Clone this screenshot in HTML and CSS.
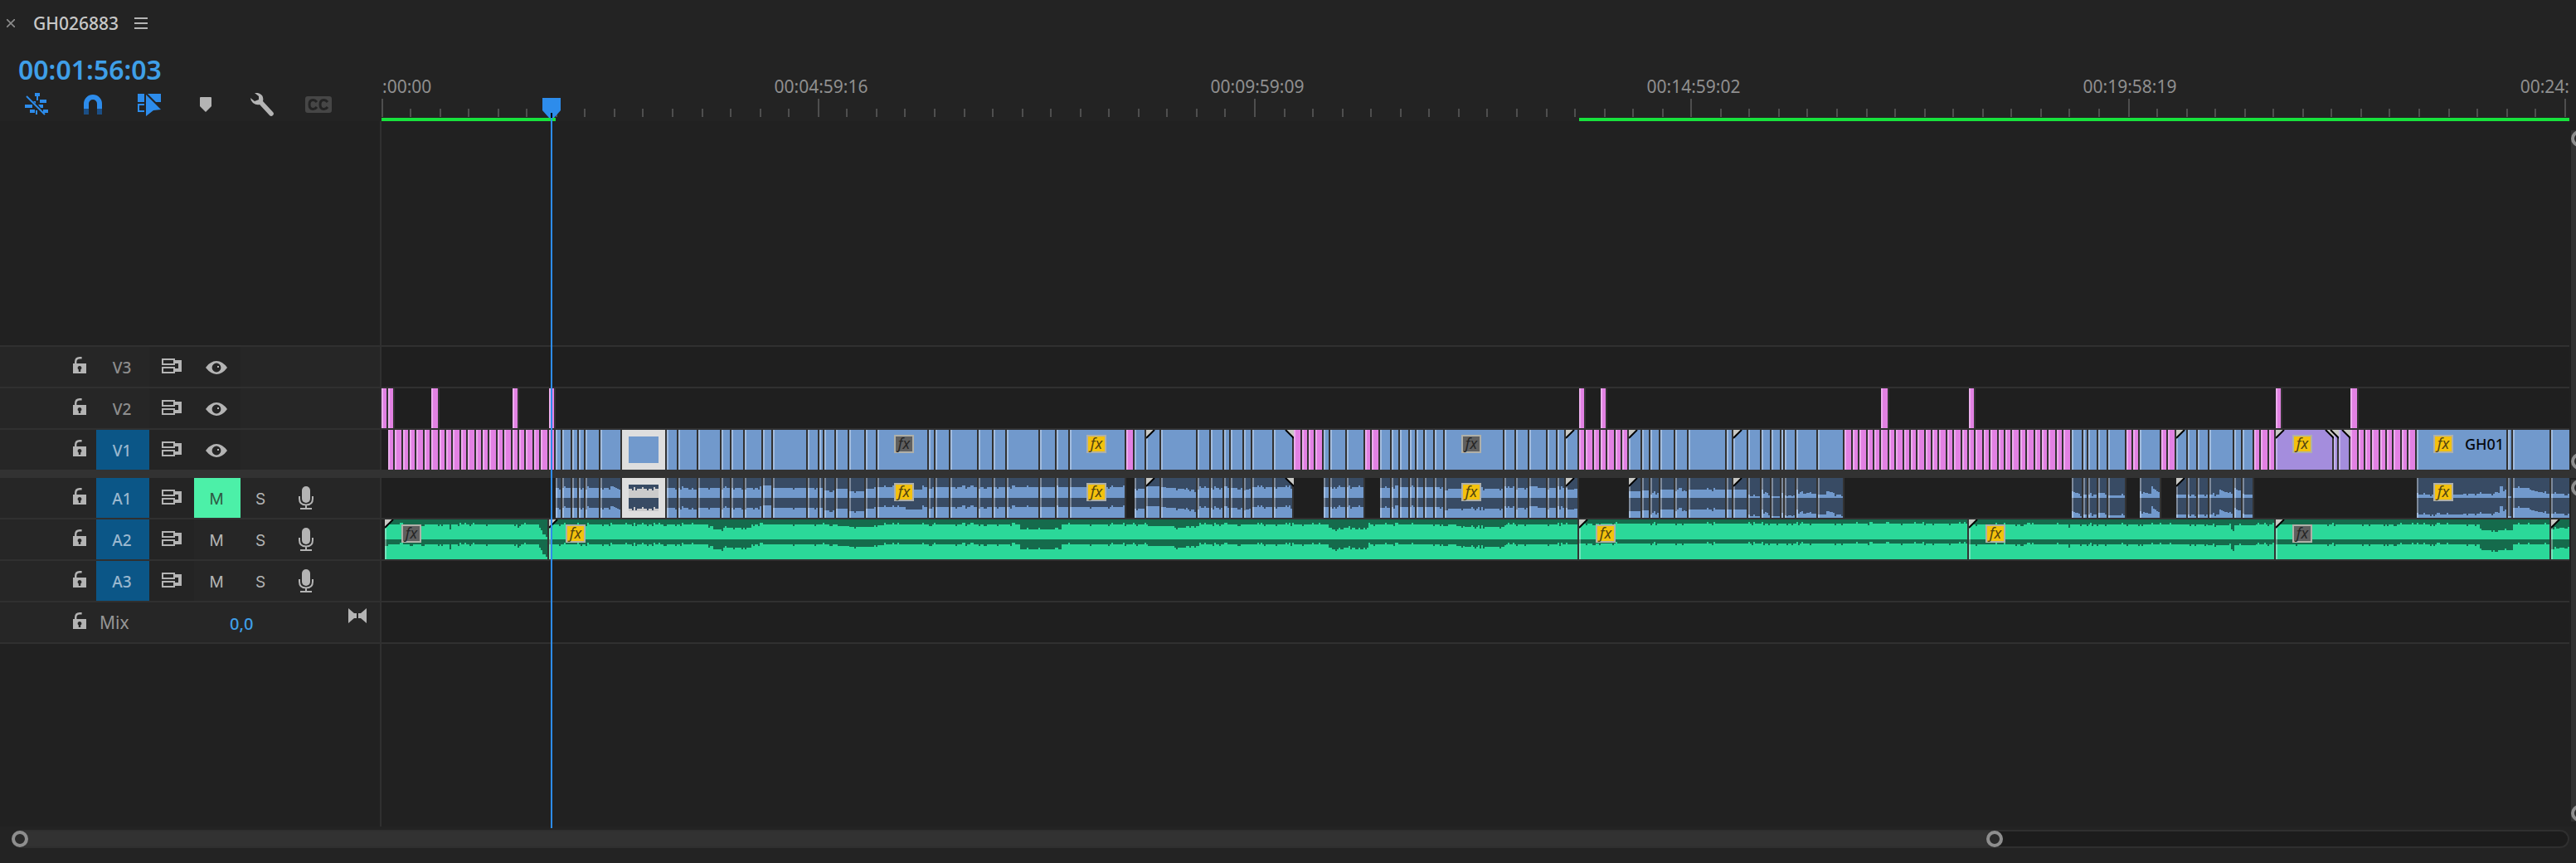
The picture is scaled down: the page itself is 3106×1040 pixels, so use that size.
FILE: index.html
```html
<!DOCTYPE html>
<html lang="en">
<head>
    <meta charset="UTF-8">
    <meta name="viewport" content="width=device-width, initial-scale=1.0">
    <title>GH026883</title>
    <link rel="stylesheet" href="styles.css">
</head>
<body>
    <!-- Icons shared by the track headers -->
    <svg class="sprite" aria-hidden="true">
        <symbol id="lock" viewBox="0 0 16 20">
            <path d="M3.2 9V6Q3.2 1.2 8 1.2h2.6" fill="none" stroke="currentColor" stroke-width="2.4"/>
            <path fill-rule="evenodd" d="M0 8h16v12H0zM8 11a2.4 2.4 0 0 0-1.2 4.5V18h2.4v-2.5A2.4 2.4 0 0 0 8 11z"/>
        </symbol>
        <symbol id="sync" viewBox="0 0 24 18">
            <path fill="none" stroke="currentColor" stroke-width="2" d="M1 1h14v6H1zM1 11h14v6H1z"/>
            <path d="M16 2h8v14h-8v-4h4V6h-4z"/>
        </symbol>
        <symbol id="eye" viewBox="0 0 26 16">
            <path fill-rule="evenodd" d="M0 8Q6 0 13 0t13 8q-6 8-13 8T0 8zM13 2.6a5.4 5.4 0 1 0 0 10.8 5.4 5.4 0 0 0 0-10.8z"/>
            <path d="M14 6h2v2h-2z"/>
        </symbol>
        <symbol id="mic" viewBox="0 0 18 28">
            <rect x="4" y="0" width="10" height="20" rx="5"/>
            <path d="M1 12v3q0 7.5 8 7.5t8-7.5v-3M9 22v5M2 27h14" fill="none" stroke="currentColor" stroke-width="2"/>
        </symbol>
    </svg>

    <main class="panel">
        <header class="tabs">
            <button class="close" aria-label="Close sequence">
                <svg width="10" height="10" viewBox="0 0 10 10"><path d="M0 0l10 10M10 0L0 10" stroke="currentColor" stroke-width="1.6"/></svg>
            </button>
            <h1 class="name">GH026883</h1>
            <button class="menu" aria-label="Panel menu">
                <svg width="16" height="14" viewBox="0 0 16 14"><path d="M0 0h16v2H0zM0 6h16v2H0zM0 12h16v2H0z"/></svg>
            </button>
        </header>

        <div class="top">
            <div class="controls">
                <div class="timecode">00:01:56:03</div>
                <div class="tools">
                    <button class="active" aria-label="Insert as nests">
                        <svg width="28" height="28" viewBox="0 0 28 28">
                            <path d="M12 0h6v4h-2v5h-2V4h-2zM18 8h8v4h-8zM0 14h9v4H0zM10 10h3v3zM6 20h6v4H6zM13 21h2v5h-2zM16 14h6v4h-3zM22 20h6v4h-6z"/>
                            <path d="M2 4l22 22" stroke="currentColor" stroke-width="2"/>
                        </svg>
                    </button>
                    <button class="active" aria-label="Snap">
                        <svg width="22" height="24" viewBox="0 0 22 24">
                            <path d="M0 17v-6a11 11 0 0 1 22 0v6h-6v-6a5 5 0 0 0-10 0v6z"/>
                            <path class="tip" d="M0 17h6v7H0zM16 17h6v7h-6z"/>
                        </svg>
                    </button>
                    <button class="active" aria-label="Linked selection">
                        <svg width="28" height="28" viewBox="0 0 28 28">
                            <path d="M0 1h8v10H0zM12 1h16v10h-6zM0 13h8v2H2v6h6v2H0zM10 2l18 18-9 1-9 7z"/>
                        </svg>
                    </button>
                    <button aria-label="Add marker">
                        <svg width="14" height="18" viewBox="0 0 14 18"><path d="M1 0h12q1 0 1 1v10l-7 7-7-7V1q0-1 1-1z"/></svg>
                    </button>
                    <button aria-label="Timeline settings">
                        <svg width="28" height="28" viewBox="0 0 28 28">
                            <path d="M5 0Q10-1 14 3q2 3 1 7l12 13q2 2 0 4-2 2-4 0L11 14q-4 1-8-2Q0 9 0 6l5 4 5-2V4z"/>
                        </svg>
                    </button>
                    <button class="dim" aria-label="Captions">
                        <svg width="32" height="20" viewBox="0 0 32 20">
                            <rect width="32" height="20" rx="3"/>
                            <path d="M14 7Q12 4.500 9.500 4.500 5 4.500 5 10t4.500 5.500Q12 15.500 14 13M27 7q-2-2.500-4.500-2.500Q18 4.500 18 10t4.500 5.500Q25 15.500 27 13" fill="none" stroke="#232323" stroke-width="3"/>
                        </svg>
                    </button>
                </div>
            </div>
            <div class="ruler">
                <div class="labels">
                    <span>:00:00</span>
                    <span>00:04:59:16</span>
                    <span>00:09:59:09</span>
                    <span>00:14:59:02</span>
                    <span>00:19:58:19</span>
                    <span>00:24:</span>
                </div>
                <svg class="ticks" height="22"><path id="ticks"/></svg>
                <div class="render" id="render"></div>
            </div>
        </div>

        <section class="section video">
            <div class="rows">
                <div class="row filler"><div class="head"></div><div class="lane"></div></div>
                <div class="row">
                    <div class="head">
                        <button class="lock" aria-label="Lock V3"><svg width="16" height="20"><use href="#lock"/></svg></button>
                        <button class="target">V3</button>
                        <button class="sync" aria-label="Sync lock V3"><svg width="24" height="18"><use href="#sync"/></svg></button>
                        <button class="eye" aria-label="Show V3"><svg width="26" height="16"><use href="#eye"/></svg></button>
                    </div>
                    <div class="lane"></div>
                </div>
                <div class="row">
                    <div class="head">
                        <button class="lock" aria-label="Lock V2"><svg width="16" height="20"><use href="#lock"/></svg></button>
                        <button class="target">V2</button>
                        <button class="sync" aria-label="Sync lock V2"><svg width="24" height="18"><use href="#sync"/></svg></button>
                        <button class="eye" aria-label="Show V2"><svg width="26" height="16"><use href="#eye"/></svg></button>
                    </div>
                    <div class="lane" id="v2"></div>
                </div>
                <div class="row">
                    <div class="head">
                        <button class="lock" aria-label="Lock V1"><svg width="16" height="20"><use href="#lock"/></svg></button>
                        <button class="target on">V1</button>
                        <button class="sync" aria-label="Sync lock V1"><svg width="24" height="18"><use href="#sync"/></svg></button>
                        <button class="eye" aria-label="Show V1"><svg width="26" height="16"><use href="#eye"/></svg></button>
                    </div>
                    <div class="lane" id="v1"></div>
                </div>
            </div>
            <div class="vscroll"><div class="bar">
                <button class="knob" aria-label="Video scroll start"></button>
                <button class="knob" aria-label="Video scroll end"></button>
            </div></div>
        </section>

        <div class="divider"></div>

        <section class="section audio">
            <div class="rows">
                <div class="row">
                    <div class="head">
                        <button class="lock" aria-label="Lock A1"><svg width="16" height="20"><use href="#lock"/></svg></button>
                        <button class="target on">A1</button>
                        <button class="sync" aria-label="Sync lock A1"><svg width="24" height="18"><use href="#sync"/></svg></button>
                        <button class="mute on">M</button>
                        <button class="solo">S</button>
                        <button class="mic" aria-label="Record A1"><svg width="18" height="28"><use href="#mic"/></svg></button>
                    </div>
                    <div class="lane" id="a1"></div>
                </div>
                <div class="row">
                    <div class="head">
                        <button class="lock" aria-label="Lock A2"><svg width="16" height="20"><use href="#lock"/></svg></button>
                        <button class="target on">A2</button>
                        <button class="sync" aria-label="Sync lock A2"><svg width="24" height="18"><use href="#sync"/></svg></button>
                        <button class="mute">M</button>
                        <button class="solo">S</button>
                        <button class="mic" aria-label="Record A2"><svg width="18" height="28"><use href="#mic"/></svg></button>
                    </div>
                    <div class="lane" id="a2"></div>
                </div>
                <div class="row">
                    <div class="head">
                        <button class="lock" aria-label="Lock A3"><svg width="16" height="20"><use href="#lock"/></svg></button>
                        <button class="target on">A3</button>
                        <button class="sync" aria-label="Sync lock A3"><svg width="24" height="18"><use href="#sync"/></svg></button>
                        <button class="mute">M</button>
                        <button class="solo">S</button>
                        <button class="mic" aria-label="Record A3"><svg width="18" height="28"><use href="#mic"/></svg></button>
                    </div>
                    <div class="lane"></div>
                </div>
                <div class="row">
                    <div class="head">
                        <button class="lock" aria-label="Lock mix"><svg width="16" height="20"><use href="#lock"/></svg></button>
                        <span class="mix">Mix</span>
                        <button class="level">0,0</button>
                        <button class="keys" aria-label="Keyframes">
                            <svg width="22" height="18" viewBox="0 0 22 18"><path d="M0 0l7 6h3v6H7l-7 6zM22 0l-7 6h-3v6h3l7 6z"/></svg>
                        </button>
                    </div>
                    <div class="lane"></div>
                </div>
                <div class="row filler last"><div class="head"></div><div class="lane"></div></div>
            </div>
            <div class="vscroll"><div class="bar">
                <button class="knob" aria-label="Audio scroll start"></button>
                <button class="knob" aria-label="Audio scroll end"></button>
            </div></div>
        </section>

        <div class="hscroll">
            <div class="thumb">
                <button class="knob" aria-label="Zoom start"></button>
                <button class="knob" aria-label="Zoom end"></button>
            </div>
        </div>

        <div class="playhead">
            <svg width="22" height="24" viewBox="0 0 22 24">
                <path d="M0 0h22v15l-8 9H8l-8-9z"/>
                <path class="slot" d="M10 18h2v6h-2z"/>
            </svg>
        </div>
    </main>

    <script src="script.js"></script>
</body>
</html>
```
FILE: styles.css
```css
* {
    box-sizing: border-box;
}

body {
    margin: 0;
    background: #232323;
    color: #b4b4b4;
    font-family: "Noto Sans", "Open Sans", sans-serif;
    overflow: hidden;
}

button {
    display: flex;
    align-items: center;
    justify-content: center;
    padding: 0;
    border: none;
    background: none;
    color: inherit;
    font: inherit;
    cursor: pointer;
}

svg {
    display: block;
    fill: currentColor;
}

.sprite {
    position: absolute;
    width: 0;
    height: 0;
}

.panel {
    position: relative;
    display: flex;
    flex-direction: column;
    height: 100vh;
}

/* Tab row */
.tabs {
    display: flex;
    align-items: center;
    height: 56px;
    padding-left: 8px;
}

.close {
    color: #8c8c8c;
}

.name {
    margin: 0 19px 0 22px;
    font-size: 21px;
    font-weight: 500;
    color: #c8c8c8;
}

/* Timecode, tools and ruler */
.top {
    display: flex;
    height: 90px;
    padding-right: 8px;
}

.controls {
    width: 460px;
}

.timecode {
    padding-left: 22px;
    font-size: 32px;
    font-weight: 600;
    line-height: 56px;
    color: #3f9fe8;
}

.tools {
    display: flex;
    padding-left: 10px;
}

.tools button {
    width: 68px;
    height: 28px;
}

.tools .active {
    color: #2d8ceb;
}

.tools .tip {
    fill: #1b4f86;
}

.tools .dim {
    color: #464646;
}

.ruler {
    display: flex;
    flex: 1;
    flex-direction: column;
    justify-content: flex-end;
    min-width: 0;
    overflow: hidden;
}

.labels {
    display: flex;
    font-size: 21px;
    line-height: 28px;
    color: #8f8f8f;
}

.labels span {
    flex: 0 0 526px;
    text-align: center;
}

.labels span:first-child {
    flex-basis: 267px;
    padding-left: 1px;
    text-align: left;
}

.labels span:last-child {
    flex: 1 1 0;
    text-align: right;
}

.ticks {
    width: 100%;
    margin-top: 1px;
    fill: #4e4e4e;
    shape-rendering: crispEdges;
}

.render {
    display: flex;
    height: 5px;
    padding-top: 1px;
}

.render div {
    background: #17e23c;
}

/* Track area */
.section {
    display: flex;
    flex: 1 1 0;
    min-height: 0;
    background: #212121;
}

.rows {
    display: flex;
    flex: 1;
    flex-direction: column;
    min-width: 0;
}

.row {
    display: flex;
    height: 50px;
    border-bottom: 2px solid #303030;
}

.video .row:last-child {
    height: 48px;
    border-bottom: none;
}

.row.filler {
    flex: 1;
}

.row.last {
    border-bottom: none;
}

.head {
    display: flex;
    align-items: stretch;
    flex: 0 0 460px;
    padding-left: 76px;
    border-right: 2px solid #303030;
    background: #262626;
}

.filler .head,
.filler .lane {
    background: #212121;
}

.lane {
    display: flex;
    flex: 1;
    min-width: 0;
    overflow: hidden;
    background: #1f1f1f;
}

.divider {
    height: 10px;
    background: #323232;
}

.lock {
    width: 40px;
    padding-bottom: 4px;
}

.target {
    width: 64px;
    padding: 2px 2px 0 0;
    font-size: 19px;
    font-weight: 500;
    color: #8e8e8e;
}

.target.on {
    background: #0b5687;
    color: #9ab8cf;
}

.sync {
    width: 54px;
    padding-bottom: 2px;
    background: #242424;
}

.eye,
.mute {
    width: 56px;
}

.eye {
    background: #242424;
    padding: 2px 2px 0 0;
}

.mute,
.solo {
    padding: 2px 2px 0 0;
    font-family: Inter, "Noto Sans", sans-serif;
    font-size: 19px;
    font-weight: 400;
}

.mute.on {
    background: #4cf0a8;
    color: #2f5a45;
}

.solo {
    width: 50px;
}

.mic {
    width: 58px;
}

.mix {
    width: 161px;
    padding-left: 4px;
    font-size: 21px;
    line-height: 48px;
    color: #969696;
}

.level {
    padding-top: 2px;
    font-size: 20px;
    font-weight: 500;
    color: #3f9fe8;
}

.keys {
    margin: 0 16px 16px auto;
}

/* Clips: the right border is the cut between two clips */
.clip {
    position: relative;
    flex: none;
    height: 48px;
    border-right: 2px solid #323232;
}

.clip::before {
    content: "";
    position: absolute;
    inset: 0 auto 0 0;
    width: 2px;
    background: rgba(255, 255, 255, 0.35);
}

.pink { background: #e281e3; }
.blue { background: #7199cc; }
.purple { background: #a48ddd; }

.wave-blue {
    background: #384b64;
    color: #7199cc;
}

.wave-green {
    background: #156b4c;
    color: #2bd899;
}

.wave {
    shape-rendering: crispEdges;
}

.clip.selected::after {
    content: "";
    position: absolute;
    inset: 0;
    border: 8px solid #dedede;
}

.clip.selected .wave {
    color: #cbcbcb;
}

.fade {
    position: absolute;
    top: 0;
    left: 0;
    z-index: 1;
    fill: #c8c8c4;
    stroke: none;
}

.fade path + path {
    fill: none;
    stroke: #000;
    stroke-width: 2;
}

.fade.out {
    right: -2px;
    left: auto;
    transform: scaleX(-1);
}

.fx {
    position: absolute;
    top: 6px;
    left: 20px;
    width: 24px;
    height: 22px;
    border: 2px solid #b0b0a8;
    background: #f4c20d;
    color: #54450f;
    font-size: 18px;
    font-style: italic;
    line-height: 17px;
    text-align: center;
}

.fx.off {
    background: #5f5f5f;
    color: #262626;
}

.title {
    position: absolute;
    top: 6px;
    left: 58px;
    color: #06080c;
    font-size: 18px;
    font-weight: 500;
    line-height: 22px;
}

/* Scroll bars */
.vscroll {
    width: 8px;
    padding-left: 2px;
    overflow: hidden;
}

.vscroll .bar {
    display: flex;
    flex-direction: column;
    justify-content: space-between;
    width: 22px;
    height: 100%;
    background: #323232;
}

.video .vscroll {
    padding-top: 11px;
}

.audio .vscroll {
    padding: 2px 0 6px 2px;
}

.knob {
    width: 20px;
    height: 20px;
    border: 4px solid #8e8e8e;
    border-radius: 50%;
    background: #2a2a2a;
}

.hscroll {
    height: 22px;
    margin: 4px 8px 18px 14px;
    border: 2px solid #2f2f2f;
    border-left: none;
    border-radius: 11px;
    background: #1c1c1c;
}

.hscroll .thumb {
    display: flex;
    align-items: center;
    justify-content: space-between;
    width: 77.9%;
    height: 18px;
    border-radius: 11px;
    background: #323232;
}

/* Playhead lies over the ruler and all tracks */
.playhead {
    position: absolute;
    top: 118px;
    bottom: 42px;
    left: 654px;
    width: 22px;
    z-index: 2;
    color: #2d8ceb;
    pointer-events: none;
}

.playhead::after {
    content: "";
    position: absolute;
    top: 24px;
    bottom: 0;
    left: 10px;
    width: 2px;
    background: #2d8ceb;
}

.playhead .slot {
    fill: #000;
}
```
FILE: script.js
```js
var LANE_START = 460;

// [colour, cut points, end of the run]
var v2 = [
    ['pink', [460, 468], 476], ['pink', [520], 530], ['pink', [618], 626], ['pink', [662], 670],
    ['pink', [1904], 1912], ['pink', [1930], 1938], ['pink', [2268], 2278], ['pink', [2374], 2382],
    ['pink', [2744], 2752], ['pink', [2834], 2844]
];

var v1 = [
    ['pink', [468, 476, 486, 494, 502, 512, 520, 530, 538, 546, 556, 564, 574, 582, 590, 600, 608, 618, 626, 634, 644, 652, 662], 670],
    ['blue', [670, 678, 690, 698, 706, 724, 750, 804, 818, 842, 870, 882, 898, 920, 932, 974, 988, 994, 1008, 1024, 1044, 1058,
        1120, 1128, 1146, 1180, 1198, 1214, 1254, 1274, 1290], 1358],
    ['pink', [1358], 1368],
    ['blue', [1368, 1382, 1400, 1444, 1460, 1476, 1484, 1500, 1510, 1536], 1560],
    ['pink', [1560, 1570, 1578, 1586], 1596],
    ['blue', [1596, 1604, 1624], 1646],
    ['pink', [1646, 1654], 1664],
    ['blue', [1664, 1678, 1688, 1700, 1708, 1718, 1730, 1742, 1814, 1828, 1844, 1866, 1878, 1888], 1904],
    ['pink', [1904, 1912, 1922, 1930, 1938, 1948, 1956], 1964],
    ['blue', [1964, 1980, 1990, 2002, 2020, 2036, 2082, 2090, 2108, 2124, 2136, 2148, 2152, 2166, 2192], 2224],
    ['pink', [2224, 2234, 2242, 2252, 2260, 2268, 2278, 2286, 2296, 2304, 2312, 2322, 2330, 2338, 2348, 2356, 2366, 2374, 2382,
        2392, 2400, 2410, 2418, 2426, 2436, 2444, 2454, 2462, 2470, 2480, 2488], 2498],
    ['blue', [2498, 2512, 2518, 2530, 2542], 2564],
    ['pink', [2564, 2572], 2580],
    ['blue', [2580], 2606],
    ['pink', [2606, 2614], 2624],
    ['blue', [2624, 2638, 2650, 2664, 2694, 2704], 2718],
    ['pink', [2718, 2726, 2736], 2744],
    ['purple', [2744, 2814, 2820], 2834],
    ['pink', [2834, 2844, 2852, 2860, 2870, 2878, 2886, 2896, 2904], 2914],
    ['blue', [2914, 3024, 3030, 3076], 3100]
];

// A1 is the sound of the camera clips
var a1 = v1.filter(function(run) {
    return run[0] === 'blue';
}).map(function(run) {
    return ['wave-blue', run[1], run[2]];
});

var a2 = [
    ['wave-green', [464], 662],
    ['wave-green', [662], 1904],
    ['wave-green', [1904, 2374, 2744, 3076], 3100]
];

// [from, depth of the quiet part, depth where the next step begins (optional)]
var blueLevels = [
    [670, 12], [738, 10, 16], [750, 13], [804, 12], [830, 14], [842, 12], [920, 9], [932, 12], [994, 15], [1008, 13], [1024, 16],
    [1044, 13], [1058, 11], [1092, 14], [1112, 11], [1368, 13], [1382, 10], [1400, 11, 15], [1444, 12], [1500, 15, 12],
    [1510, 11], [1664, 12], [1678, 11], [1742, 13], [1814, 12], [1844, 10], [1854, 12], [1888, 14, 10], [1964, 16], [1980, 15],
    [1990, 18], [2002, 14], [2020, 14], [2024, 12], [2028, 14, 18], [2036, 14], [2108, 22], [2124, 16, 20], [2136, 22],
    [2148, 18], [2152, 21], [2166, 16, 20], [2178, 18], [2182, 15], [2184, 19], [2192, 20], [2202, 16, 18], [2212, 20],
    [2498, 16, 20], [2508, 20], [2530, 18], [2542, 21], [2580, 16, 20], [2594, 12, 18], [2604, 20], [2676, 14, 20],
    [2690, 21], [2694, 12, 18], [2702, 19], [2706, 20], [2914, 20], [2970, 19], [3008, 15], [3012, 18], [3014, 10], [3018, 16],
    [3024, 22], [3030, 12], [3048, 14, 20], [3076, 19]
];

var greenLevels = [
    [464, 6], [541, 10], [544, 6], [624, 10], [626, 6], [650, 10, 24], [660, 6], [853, 8], [860, 12], [872, 10], [906, 6],
    [1010, 8], [1024, 9], [1058, 7], [1066, 6], [1230, 12], [1280, 6], [1384, 8], [1416, 10], [1432, 8], [1444, 6], [1602, 10],
    [1608, 12], [1620, 10], [1634, 12], [1650, 6], [1756, 8], [1766, 9], [1816, 6], [1904, 5], [2374, 6], [2494, 10], [2496, 6],
    [2662, 7], [2690, 14], [2694, 7], [2720, 6], [2990, 13], [3030, 6], [3076, 12, 8]
];

var off = 'off', on = 'on';
var options = {
    v1: {
        fx: { 1058: off, 1290: on, 1742: off, 2744: on, 2914: on },
        fadeIn: [1382, 1888, 1964, 2090, 2624, 2744],
        fadeOut: [1536, 2744, 2814, 2820],
        selected: 750,
        title: { 2914: 'GH01' }
    },
    a1: {
        fx: { 1058: on, 1290: on, 1742: on, 2914: on },
        fadeIn: [1382, 1888, 1964, 2090, 2624],
        fadeOut: [1536],
        selected: 750,
        levels: blueLevels
    },
    a2: {
        fx: { 464: off, 662: on, 1904: on, 2374: on, 2744: off },
        fadeIn: [464, 662, 1904, 2374, 2744, 3076],
        levels: greenLevels
    }
};

function depthAt(levels, x) {
    var i = 0;
    while (i < levels.length - 1 && levels[i + 1][0] <= x) {
        i++;
    }
    var from = levels[i];
    var depth = from[1];
    if (from.length > 2) {
        var to = i < levels.length - 1 ? levels[i + 1][0] : 3100;
        depth += (from[2] - from[1]) * (x - from[0]) / (to - from[0]);
    }
    // small ripple that is the same on every load
    var n = Math.abs(Math.sin(x * 12.9898) * 43758.5453) % 1;
    if (n > 0.88) depth += 2;
    if (n < 0.1) depth -= 2;
    return Math.min(22, Math.round(depth));
}

// two channels, 24px each
function wave(levels, start, width) {
    var d = '';
    for (var x = 0; x < width; x += 2) {
        var depth = depthAt(levels, start + x);
        d += 'M' + x + ' ' + depth + 'h2V24h-2zM' + x + ' ' + (24 + depth) + 'h2V48h-2z';
    }
    return '<svg class="wave" width="' + width + '" height="48"><path d="' + d + '"/></svg>';
}

function fade(kind) {
    return '<svg class="fade ' + kind + '" width="11" height="11"><path d="M0 0h10L0 10z"/><path d="M0 10L10 0"/></svg>';
}

function drawLane(id, runs) {
    var opt = options[id] || {};
    var html = '';
    var cursor = LANE_START;
    runs.forEach(function(run) {
        run[1].forEach(function(start, i) {
            var end = i < run[1].length - 1 ? run[1][i + 1] : run[2];
            var width = end - start;
            var cls = 'clip ' + run[0] + (opt.selected === start ? ' selected' : '');
            html += '<div class="' + cls + '" style="width:' + width + 'px;margin-left:' + (start - cursor) + 'px">';
            if (opt.levels) html += wave(opt.levels, start, width - 2);
            if (opt.fadeIn && opt.fadeIn.indexOf(start) > -1) html += fade('in');
            if (opt.fadeOut && opt.fadeOut.indexOf(start) > -1) html += fade('out');
            if (opt.fx && opt.fx[start]) html += '<span class="fx ' + opt.fx[start] + '">fx</span>';
            if (opt.title && opt.title[start]) html += '<span class="title">' + opt.title[start] + '</span>';
            html += '</div>';
            cursor = end;
        });
    });
    document.getElementById(id).innerHTML = html;
}

function drawRuler() {
    var d = '';
    for (var i = 0; i <= 75; i++) {
        var x = Math.floor(i * 35.1 / 2) * 2;
        d += i % 15 === 0 ? 'M' + x + ' 0h2v22h-2z' : 'M' + x + ' 12h2v10h-2z';
    }
    document.getElementById('ticks').setAttribute('d', d);

    // rendered parts of the sequence
    var cursor = LANE_START;
    document.getElementById('render').innerHTML = [[460, 670], [1904, 3098]].map(function(part) {
        var html = '<div style="width:' + (part[1] - part[0]) + 'px;margin-left:' + (part[0] - cursor) + 'px"></div>';
        cursor = part[1];
        return html;
    }).join('');
}

drawRuler();
drawLane('v2', v2);
drawLane('v1', v1);
drawLane('a1', a1);
drawLane('a2', a2);
```
